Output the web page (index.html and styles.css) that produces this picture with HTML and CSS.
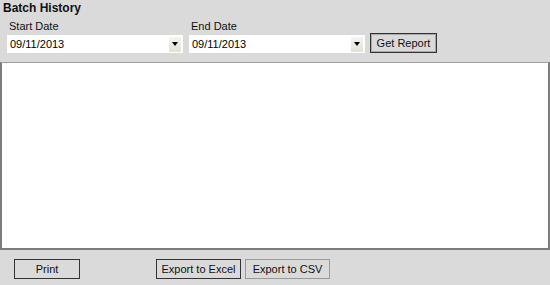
FILE: index.html
```html
<!DOCTYPE html>
<html lang="en">
<head>
    <meta charset="UTF-8">
    <title>Batch History</title>
    <link rel="stylesheet" href="styles.css">
</head>
<body>
    <div class="page">
        <h1 class="title">Batch History</h1>
        <div class="filters">
            <div class="field">
                <label class="field-label">Start Date</label>
                <div class="date-box">
                    <span class="date-value">09/11/2013</span>
                    <span class="drop-btn"><span class="arrow"></span></span>
                </div>
            </div>
            <div class="field">
                <label class="field-label">End Date</label>
                <div class="date-box">
                    <span class="date-value">09/11/2013</span>
                    <span class="drop-btn"><span class="arrow"></span></span>
                </div>
            </div>
            <button class="btn btn-focus">Get Report</button>
        </div>

        <div class="report"></div>

        <div class="actions">
            <button class="btn btn-print">Print</button>
            <button class="btn btn-excel">Export to Excel</button>
            <button class="btn btn-csv">Export to CSV</button>
        </div>
    </div>
</body>
</html>
```

FILE: styles.css
```css
html, body {
    margin: 0;
    padding: 0;
    background: #dadada;
}

body {
    font-family: "Liberation Sans", Arial, sans-serif;
    font-size: 11px;
    color: #000;
}

.page {
    width: 550px;
    height: 285px;
}

.title {
    margin: 0;
    padding: 1px 0 0 3px;
    font-size: 12px;
    font-weight: bold;
    line-height: 14px;
    color: #111;
}

.filters {
    display: flex;
    align-items: flex-start;
    padding: 5px 0 0 7px;
    height: 42px;
    box-sizing: border-box;
}

.field {
    display: flex;
    flex-direction: column;
    width: 176px;
    margin-right: 6px;
}

.field-label {
    padding-left: 2px;
    line-height: 13px;
    height: 15px;
    color: #111;
}

.date-box {
    display: flex;
    align-items: center;
    justify-content: space-between;
    height: 18px;
    background: #fff;
    padding: 0 2px 0 3px;
}

.date-value {
    line-height: 18px;
}

.drop-btn {
    display: flex;
    align-items: center;
    justify-content: center;
    width: 12px;
    height: 15px;
    background: linear-gradient(#f4f4f4, #e2e2d6);
}

.arrow {
    width: 0;
    height: 0;
    border-left: 3px solid transparent;
    border-right: 3px solid transparent;
    border-top: 4px solid #000;
}

.btn {
    font-family: "Liberation Sans", Arial, sans-serif;
    font-size: 11px;
    color: #111;
    background: #dadada;
    border: 1px solid #333;
    height: 20px;
    padding: 0;
    margin: 0;
}

.btn-focus {
    margin-top: 13px;
    margin-left: -1px;
    width: 67px;
    box-shadow: inset 0 0 0 1px #a8a8a8;
}

.report {
    margin-top: 5px;
    height: 185px;
    background: #fff;
    border-top: 1px solid #a0a0a0;
    border-left: 2px solid #7c7c7c;
    border-right: 2px solid #7c7c7c;
    border-bottom: 2px solid #7c7c7c;
}

.actions {
    display: flex;
    padding: 9px 0 0 14px;
}

.btn-print {
    width: 66px;
}

.btn-excel {
    width: 85px;
    margin-left: 76px;
}

.btn-csv {
    width: 85px;
    margin-left: 4px;
    border-color: #9a9a9a;
}
```
